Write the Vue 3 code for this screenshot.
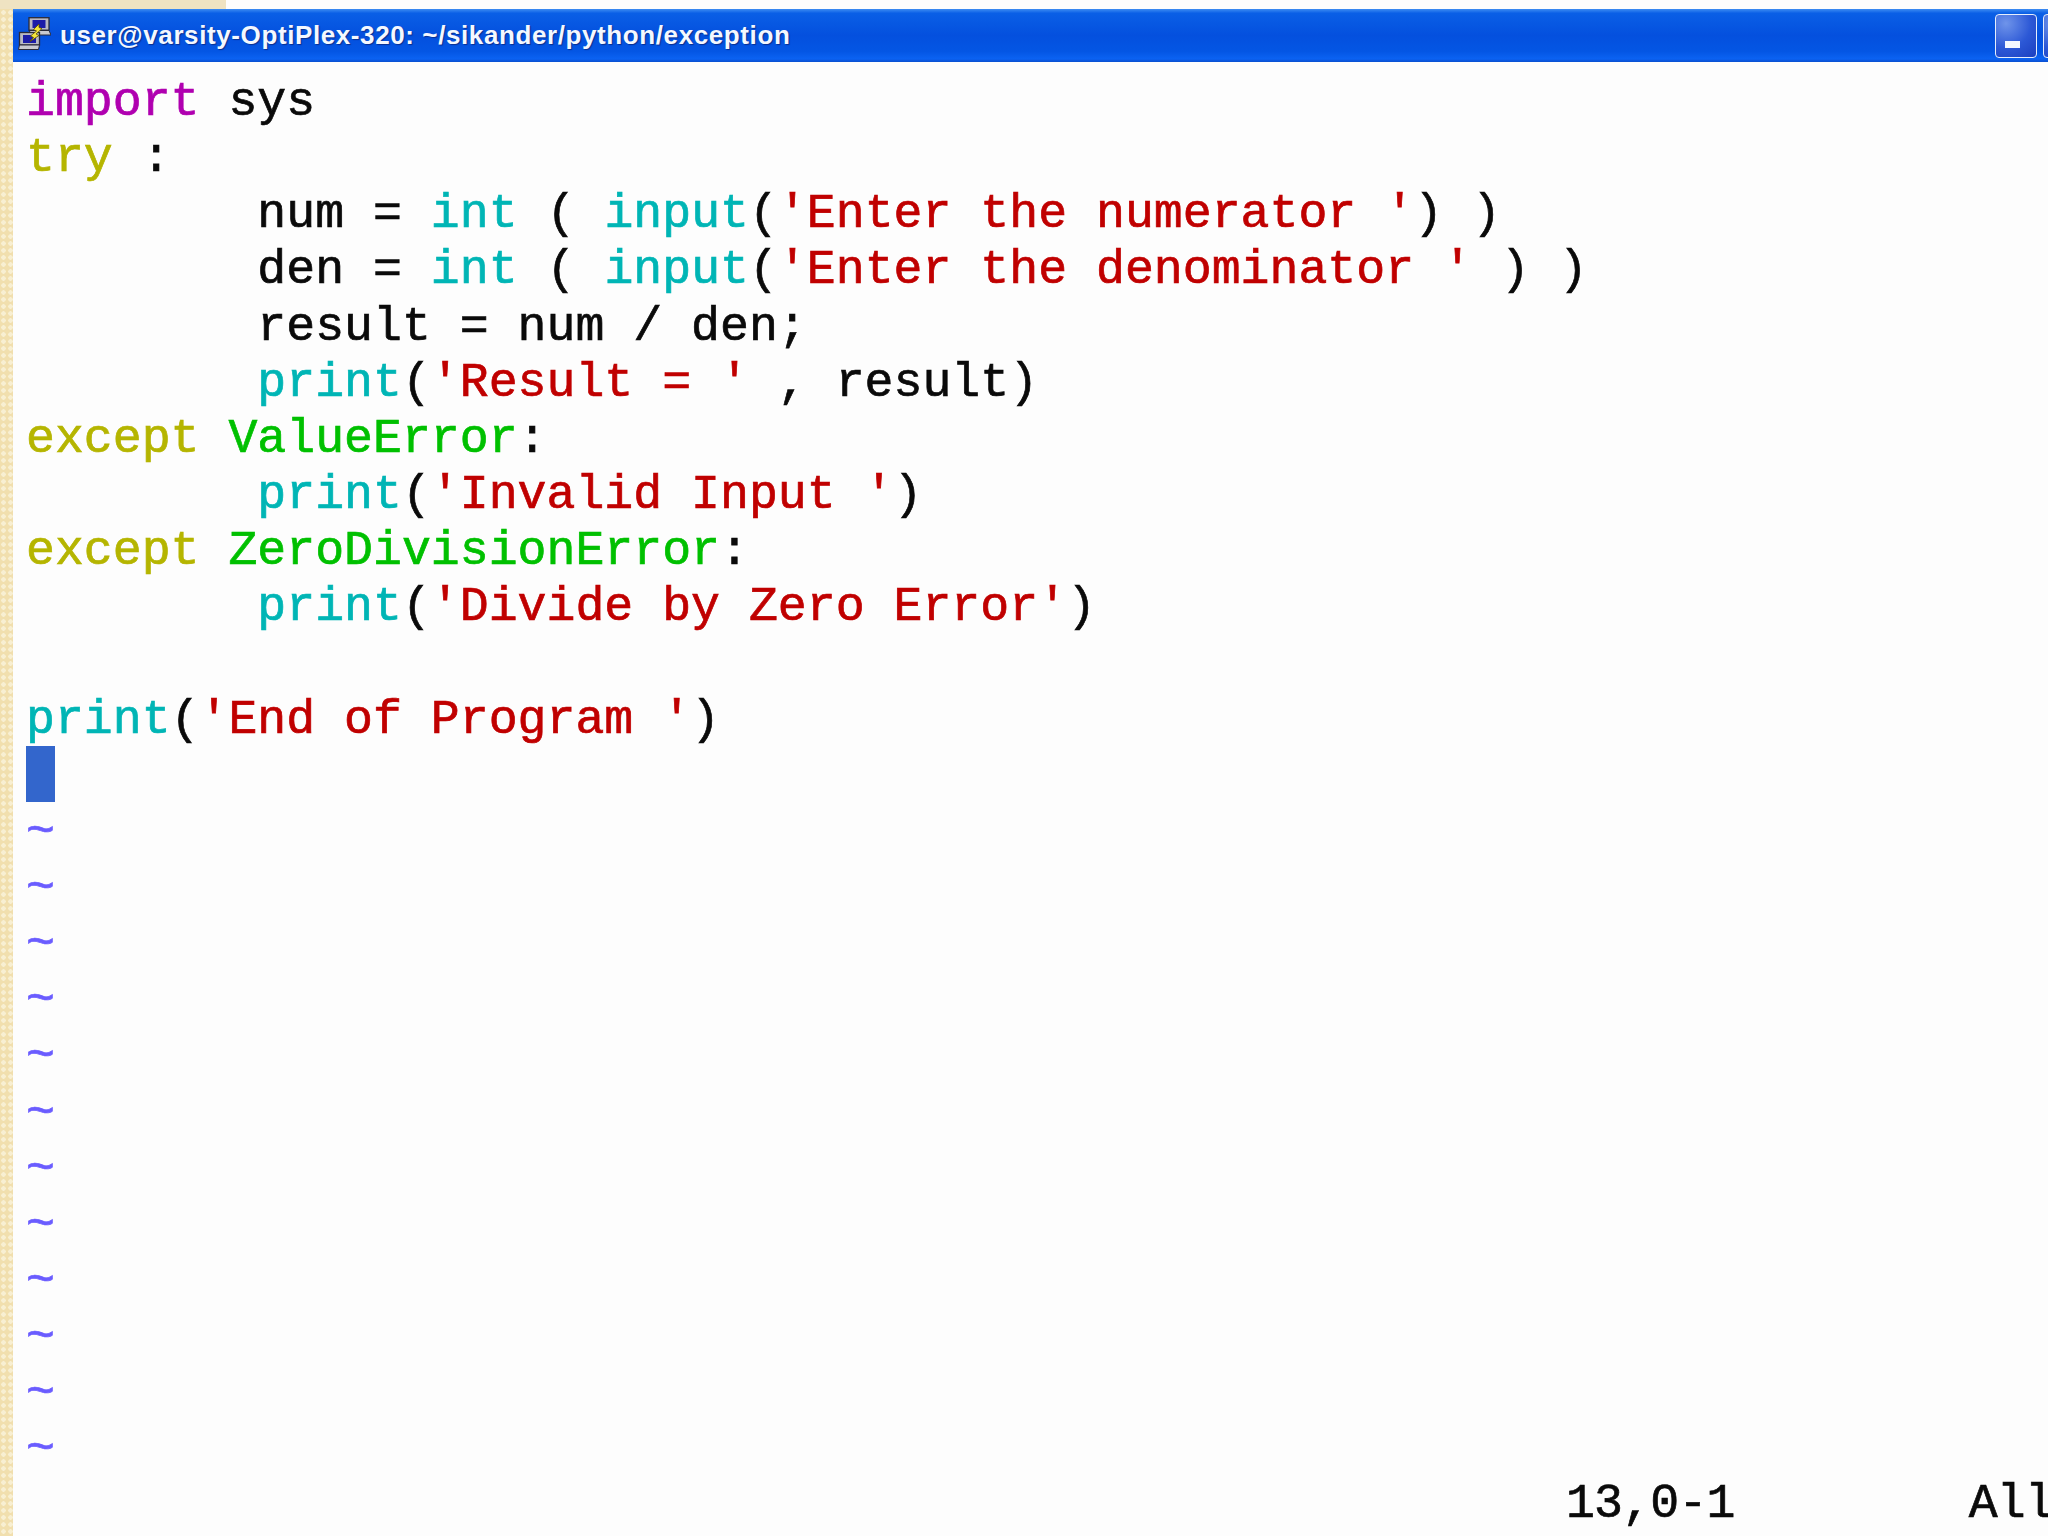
<script setup>
const k = 'kw', t = 'ctl', b = 'bi', s = 'str', e = 'exc', n = 'txt'
const code = [
  [[k, 'import'], [n, ' sys']],
  [[t, 'try'], [n, ' :']],
  [[n, '        num = '], [b, 'int'], [n, ' ( '], [b, 'input'], [n, '('], [s, "'Enter the numerator '"], [n, ') )']],
  [[n, '        den = '], [b, 'int'], [n, ' ( '], [b, 'input'], [n, '('], [s, "'Enter the denominator '"], [n, ' ) )']],
  [[n, '        result = num / den;']],
  [[n, '        '], [b, 'print'], [n, '('], [s, "'Result = '"], [n, ' , result)']],
  [[t, 'except'], [n, ' '], [e, 'ValueError'], [n, ':']],
  [[n, '        '], [b, 'print'], [n, '('], [s, "'Invalid Input '"], [n, ')']],
  [[t, 'except'], [n, ' '], [e, 'ZeroDivisionError'], [n, ':']],
  [[n, '        '], [b, 'print'], [n, '('], [s, "'Divide by Zero Error'"], [n, ')']],
  [],
  [[b, 'print'], [n, '('], [s, "'End of Program '"], [n, ')']],
]
const tildes = Array.from({ length: 12 }, (_, i) => i)
</script>

<template>
  <div class="screen">
    <div class="wall-top"><div class="wall-piece"></div></div>
    <div class="body">
      <div class="wall-left"></div>
      <div class="window">
        <header class="titlebar">
          <svg class="app-icon" viewBox="0 0 33 33" width="33" height="33">
            <rect x="11" y="0.7" width="20" height="12.5" fill="#b9b9c2" stroke="#2b2b3a" stroke-width="1.3"/>
            <rect x="14.5" y="3" width="13" height="8" fill="#1c1ca8"/>
            <path d="M11 13.5h20l2 4.5H14z" fill="#c9c9d0" stroke="#2b2b3a" stroke-width="1"/>
            <rect x="1.5" y="15.5" width="20" height="12.5" fill="#b9b9c2" stroke="#2b2b3a" stroke-width="1.3"/>
            <rect x="5" y="18" width="13" height="8" fill="#1c1ca8"/>
            <path d="M1.5 28h20l-1 4.5H.5z" fill="#c9c9d0" stroke="#2b2b3a" stroke-width="1"/>
            <path d="M21 7l-5.5 5.5 3 1.5-6 5 3 1.5-3.5 4 9-6-3-1.500 6-5.500-3-1z" fill="#f4e53c" stroke="#5c4d00" stroke-width=".8"/>
          </svg>
          <span class="title">user@varsity-OptiPlex-320: ~/sikander/python/exception</span>
          <div class="controls">
            <div class="ctl-btn min"><i></i></div>
            <div class="ctl-btn"></div>
          </div>
        </header>
        <main class="term">
          <div v-for="(line, i) in code" :key="i" class="line">
            <span v-for="(tok, j) in line" :key="j" :class="tok[0]">{{ tok[1] }}</span>
          </div>
          <div class="line"><span class="cursor"></span></div>
          <div v-for="i in tildes" :key="'t' + i" class="line tilde">~</div>
          <div class="status"><span>13,0-1</span><span class="all">All</span></div>
        </main>
      </div>
    </div>
  </div>
</template>

<style>
html, body { margin: 0; background: #fdfdfd; overflow: hidden; }
</style>

<style scoped>
.screen {
  width: 2048px;
  height: 1536px;
  overflow: hidden;
  display: flex;
  flex-direction: column;
  background: #fdfdfd;
}
.wall-top { height: 9px; flex: none; }
.wall-piece {
  width: 226px;
  height: 9px;
  background: #efe3c2;
}
.body { flex: 1; display: flex; min-height: 0; }
.wall-left {
  width: 13px;
  flex: none;
  background-color: #f1dfae;
  background-image: radial-gradient(circle at 50% 50%, #f8efd2 0 2px, transparent 2.5px);
  background-size: 7px 7px;
}
.window { flex: 1; min-width: 0; display: flex; flex-direction: column; }
.titlebar {
  height: 53px;
  flex: none;
  display: flex;
  align-items: center;
  background: linear-gradient(180deg, #3d8cf2 0, #0a5fe6 8%, #0450de 50%, #0456e4 80%, #0b62f2 94%, #0a4fd0 100%);
  overflow: hidden;
}
.app-icon { flex: none; margin: 0 0 4px 5px; }
.title {
  margin-left: 9px;
  font: 700 26px "Liberation Sans", sans-serif;
  letter-spacing: 0.6px;
  color: #f4f8ff;
  white-space: nowrap;
  text-shadow: 1px 1px 1px #0a2f90;
}
.controls { margin-left: auto; display: flex; gap: 6px; margin-right: -37px; }
.ctl-btn {
  width: 42px;
  height: 44px;
  box-sizing: border-box;
  border: 1.5px solid #e6eefc;
  border-radius: 4px;
  background: radial-gradient(circle at 25% 20%, #6f94ea 0, #2c58d6 55%, #1b3fc0 100%);
  position: relative;
}
.min i {
  position: absolute;
  left: 9px;
  bottom: 9px;
  width: 15px;
  height: 7px;
  background: #f4f8ff;
}
.term {
  flex: 1;
  padding: 10px 0 0 13px;
  font: 400 48.2px/61px "Liberation Mono", monospace;
  -webkit-text-stroke: 0.7px currentColor;
  color: #0a0a0a;
  position: relative;
}
.line { height: 56.15px; white-space: pre; }
.kw { color: #b000b0; }
.ctl { color: #b5b500; }
.bi { color: #00b5b5; }
.str { color: #c00000; }
.exc { color: #00c000; }
.txt { color: #0a0a0a; }
.tilde { color: #6a5cff; }
.cursor {
  display: block;
  width: 29px;
  height: 56px;
  background: #3366cc;
}
.status {
  display: flex;
  height: 56px;
  line-height: 56px;
  padding-left: 1540px;
  white-space: pre;
  letter-spacing: -0.8px;
}
.all { margin-left: 234px; }
</style>
